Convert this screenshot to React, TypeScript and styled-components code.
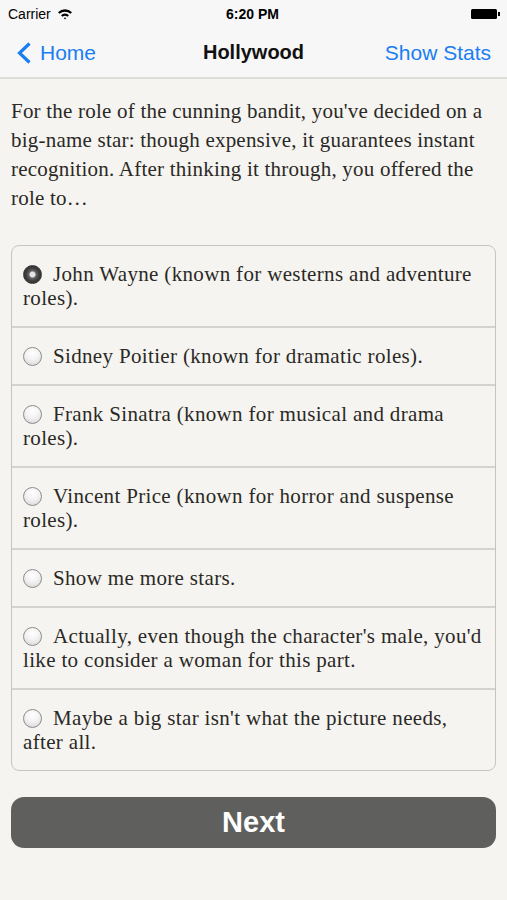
import React, { useState } from 'react'
import styled, { createGlobalStyle } from 'styled-components'

const GlobalStyle = createGlobalStyle`
	html, body {
		margin: 0;
		padding: 0;
		background: #f6f4f0;
	}
	#root {
		min-height: 900px;
	}
`

const Screen = styled.div`
	width: 507px;
	height: 900px;
	background: #f6f4f0;
	display: flex;
	flex-direction: column;
	font-family: 'Liberation Serif', serif;
`

const Header = styled.div`
	background: #f7f7f7;
	border-bottom: 2px solid #dddcda;
	font-family: 'Liberation Sans', Arial, sans-serif;
`

const StatusBar = styled.div`
	height: 28px;
	display: grid;
	grid-template-columns: 1fr auto 1fr;
	align-items: center;
	padding: 0 10px 0 8px;
	font-size: 14px;
	color: #000;

	.left {
		display: flex;
		align-items: center;
		gap: 6px;
	}

	.time {
		font-weight: 700;
	}

	.right {
		display: flex;
		justify-content: flex-end;
	}
`

const Battery = styled.div`
	width: 26px;
	height: 10px;
	background: #000;
	border-radius: 1.5px;
	position: relative;

	&::after {
		content: '';
		position: absolute;
		right: -3px;
		top: 3px;
		width: 2px;
		height: 4px;
		background: #000;
	}
`

const NavBar = styled.div`
	height: 49px;
	display: grid;
	grid-template-columns: 1fr auto 1fr;
	align-items: center;
	padding: 0 16px 0 16px;
`

const NavButton = styled.button<{ $align: 'left' | 'right' }>`
	border: none;
	background: none;
	padding: 0;
	display: flex;
	align-items: center;
	gap: 8px;
	justify-self: ${({ $align }) => ($align === 'left' ? 'start' : 'end')};
	font-family: 'Liberation Sans', Arial, sans-serif;
	font-size: 21px;
	color: #1a7ef2;
	cursor: pointer;
`

const Title = styled.div`
	font-size: 20px;
	font-weight: 700;
	color: #111;
`

const Content = styled.div`
	padding: 18px 11px 0 11px;
	display: flex;
	flex-direction: column;
`

const Prompt = styled.p`
	margin: 0 0 32px;
	font-size: 21px;
	letter-spacing: 0.22px;
	line-height: 29px;
	color: #2a2926;
`

const Choices = styled.div`
	border: 1px solid #c5c4c1;
	border-radius: 8px;
	overflow: hidden;
	background: #f6f4f0;
`

const Choice = styled.label`
	display: block;
	padding: 16px 9px 16px 11px;
	font-size: 21px;
	letter-spacing: 0.34px;
	line-height: 24px;
	color: #2a2926;
	cursor: pointer;

	& + & {
		border-top: 2px solid #d4d3d0;
	}
`

const Radio = styled.span<{ $checked: boolean }>`
	display: inline-block;
	vertical-align: -3px;
	width: 19px;
	height: 19px;
	box-sizing: border-box;
	margin-right: 11px;
	border-radius: 50%;
	border: 1px solid ${({ $checked }) => ($checked ? '#3a3a3a' : '#8c8c8c')};
	background: ${({ $checked }) =>
		$checked
			? 'radial-gradient(circle at 50% 50%, #e4e4e4 0 2.5px, #6a6a6a 3.5px, #444 6px, #2e2e2e 9px)'
			: 'radial-gradient(circle at 50% 30%, #ffffff 0, #f3f3f3 45%, #d2d2d2 100%)'};
`

const NextButton = styled.button`
	margin-top: 26px;
	height: 51px;
	border: none;
	border-radius: 13px;
	background: #5f5f5e;
	color: #fff;
	font-family: 'Liberation Sans', Arial, sans-serif;
	font-size: 29px;
	font-weight: 700;
	cursor: pointer;
`

const choices = [
	'John Wayne (known for westerns and adventure roles).',
	'Sidney Poitier (known for dramatic roles).',
	'Frank Sinatra (known for musical and drama roles).',
	'Vincent Price (known for horror and suspense roles).',
	'Show me more stars.',
	"Actually, even though the character's male, you'd like to consider a woman for this part.",
	"Maybe a big star isn't what the picture needs, after all."
]

const WifiIcon = () => (
	<svg width='16' height='12' viewBox='0 0 16 12'>
		<path d='M1 4.2 A10 10 0 0 1 15 4.2 L13.4 5.8 A7.8 7.8 0 0 0 2.6 5.8 Z' fill='#000' />
		<path d='M4 7.2 A5.8 5.8 0 0 1 12 7.2 L10.4 8.8 A3.6 3.6 0 0 0 5.6 8.8 Z' fill='#000' />
		<path d='M6.8 10 A1.8 1.8 0 0 1 9.2 10 L8 11.4 Z' fill='#000' />
	</svg>
)

const App = () => {
	const [selected, setSelected] = useState(0)

	return (
		<Screen>
			<GlobalStyle />
			<Header>
				<StatusBar>
					<div className='left'>
						<span>Carrier</span>
						<WifiIcon />
					</div>
					<span className='time'>6:20 PM</span>
					<div className='right'>
						<Battery />
					</div>
				</StatusBar>
				<NavBar>
					<NavButton $align='left'>
						<svg width='16' height='22' viewBox='0 0 16 22'>
							<path d='M13.5 1.5 L3.5 11 L13.5 20.5' fill='none' stroke='#1a7ef2' strokeWidth='3.2' />
						</svg>
						Home
					</NavButton>
					<Title>Hollywood</Title>
					<NavButton $align='right'>Show Stats</NavButton>
				</NavBar>
			</Header>
			<Content>
				<Prompt>
					For the role of the cunning bandit, you've decided on a big-name star: though expensive,
					it guarantees instant recognition. After thinking it through, you offered the role to…
				</Prompt>
				<Choices>
					{choices.map((text, i) => (
						<Choice key={i} onClick={() => setSelected(i)}>
							<Radio $checked={selected === i} />
							{text}
						</Choice>
					))}
				</Choices>
				<NextButton>Next</NextButton>
			</Content>
		</Screen>
	)
}

export default App
